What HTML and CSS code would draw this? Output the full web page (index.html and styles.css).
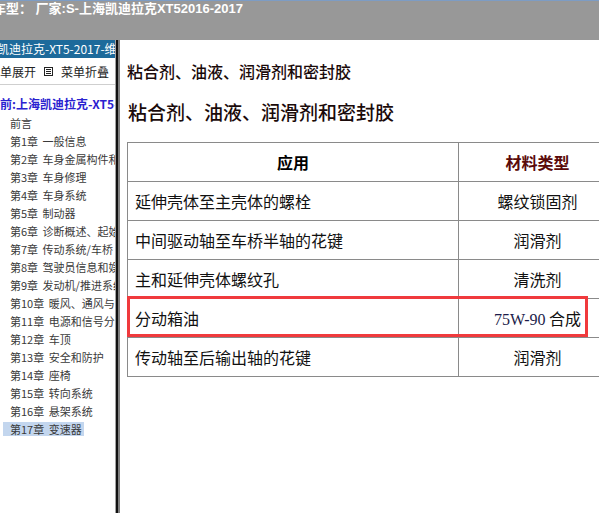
FILE: index.html
```html
<!DOCTYPE html>
<html lang="zh-CN">

<head>
    <meta charset="UTF-8">
    <meta name="viewport" content="width=device-width, initial-scale=1.0">
    <title>维修手册</title>
    <link rel="stylesheet" href="styles.css">
</head>

<body>

    <div class="topbar">
        <span class="car-info">车型： 厂家:S-上海凯迪拉克XT52016-2017</span>
    </div>

    <div class="main">
        <div class="sidebar">
            <div class="side-title">凯迪拉克-XT5-2017-维修手册</div>
            <div class="side-menu">
                <span class="menu-open">菜单展开</span>
                <svg class="menu-icon" width="9" height="9" viewBox="0 0 9 9">
                    <rect x="0.5" y="0.5" width="8" height="8" fill="#fff" stroke="#222" />
                    <line x1="2" y1="2.5" x2="7" y2="2.5" stroke="#222" />
                    <line x1="2" y1="4.5" x2="7" y2="4.5" stroke="#222" />
                    <line x1="2" y1="6.5" x2="7" y2="6.5" stroke="#222" />
                </svg>
                <span>菜单折叠</span>
            </div>
            <div class="current">当前:上海凯迪拉克-XT5-2017</div>
            <ul class="chapters">
                <li>前言</li>
                <li>第1章 一般信息</li>
                <li>第2章 车身金属构件和外饰</li>
                <li>第3章 车身修理</li>
                <li>第4章 车身系统</li>
                <li>第5章 制动器</li>
                <li>第6章 诊断概述、起始</li>
                <li>第7章 传动系统/车桥</li>
                <li>第8章 驾驶员信息和娱乐</li>
                <li>第9章 发动机/推进系统</li>
                <li>第10章 暖风、通风与空调</li>
                <li>第11章 电源和信号分配</li>
                <li>第12章 车顶</li>
                <li>第13章 安全和防护</li>
                <li>第14章 座椅</li>
                <li>第15章 转向系统</li>
                <li>第16章 悬架系统</li>
                <li><span class="active">第17章 变速器</span></li>
            </ul>
        </div>

        <div class="splitter"></div>

        <div class="content">
            <h3 class="sub-title">粘合剂、油液、润滑剂和密封胶</h3>
            <h2 class="page-title">粘合剂、油液、润滑剂和密封胶</h2>

            <div class="table-wrap">
                <table>
                    <tr>
                        <th class="col-app">应用</th>
                        <th class="col-type">材料类型</th>
                    </tr>
                    <tr>
                        <td>延伸壳体至主壳体的螺栓</td>
                        <td class="center">螺纹锁固剂</td>
                    </tr>
                    <tr>
                        <td>中间驱动轴至车桥半轴的花键</td>
                        <td class="center">润滑剂</td>
                    </tr>
                    <tr>
                        <td>主和延伸壳体螺纹孔</td>
                        <td class="center">清洗剂</td>
                    </tr>
                    <tr>
                        <td>分动箱油</td>
                        <td class="center"><span class="oil">75W-90</span> 合成</td>
                    </tr>
                    <tr>
                        <td>传动轴至后输出轴的花键</td>
                        <td class="center">润滑剂</td>
                    </tr>
                </table>
                <div class="mark"></div>
            </div>
        </div>
    </div>

</body>

</html>
```

FILE: styles.css
```css
html,
body {
    margin: 0;
    height: 100%;
    overflow: hidden;
}

body {
    font-family: "Noto Sans CJK SC", sans-serif;
    background-color: #fff;
}

.topbar {
    height: 40px;
    box-sizing: border-box;
    background-color: #989898;
    border-top: 1px solid #7d9cc4;
    overflow: hidden;
    white-space: nowrap;
}

.car-info {
    display: block;
    margin-left: -7px;
    color: #fff;
    font-family: "Liberation Sans", "Noto Sans CJK SC", sans-serif;
    font-size: 13px;
    font-weight: bold;
    line-height: 15px;
}

.main {
    display: flex;
    height: 473px;
}

/* left menu */
.sidebar {
    width: 115px;
    flex: none;
    overflow: hidden;
    white-space: nowrap;
    font-size: 12px;
}

.side-title {
    height: 18px;
    line-height: 18px;
    background-color: #1d6a9b;
    color: #fff;
    text-indent: -3px;
}

.side-menu {
    display: flex;
    align-items: center;
    gap: 8px;
    height: 26px;
    margin-left: -12px;
    color: #222;
    border-bottom: 1px solid #cfcfcf;
}

.menu-icon {
    flex: none;
}

.current {
    margin-top: 12px;
    margin-left: -12px;
    line-height: 14px;
    color: #2a22d0;
    font-weight: bold;
}

.chapters {
    list-style: none;
    margin: 3px 0 0;
    padding: 0 0 0 10px;
    color: #3a3a3a;
    font-size: 11px;
    word-spacing: 2px;
}

.chapters li {
    line-height: 18px;
}

.chapters .active {
    display: inline-block;
    line-height: 14px;
    margin-left: -7px;
    padding: 0 2px 0 7px;
    background-color: #c3d6ee;
}

/* bar between menu and page */
.splitter {
    width: 2px;
    flex: none;
    background-color: #111;
    border-left: 1px solid #a2a2a2;
    border-right: 2px solid #7e7e7e;
}

/* page */
.content {
    flex: 1;
    overflow: hidden;
    padding-left: 7px;
}

.sub-title {
    margin: 21px 0 0;
    font-size: 16px;
    font-weight: 500;
    line-height: 20px;
    color: #1a0a0a;
}

.page-title {
    margin: 19px 0 0 1px;
    font-size: 19px;
    font-weight: 500;
    line-height: 24px;
    color: #1a0a0a;
    white-space: nowrap;
}

.table-wrap {
    position: relative;
    margin-top: 18px;
    width: 490px;
}

table {
    width: 490px;
    border-collapse: collapse;
    font-size: 16px;
    color: #111;
}

th,
td {
    height: 38px;
    border: 1px solid #8a8a8a;
    padding: 0 7px;
    white-space: nowrap;
}

.col-app {
    width: 316px;
    color: #000;
}

.col-type {
    color: #5a0a0a;
}

.center {
    text-align: center;
}

.oil {
    font-family: "Liberation Serif", serif;
    color: #1c1c4a;
}

/* highlight frame over the oil row */
.mark {
    position: absolute;
    left: 0;
    top: 154px;
    width: 461px;
    height: 41px;
    box-sizing: border-box;
    border: 3px solid #f03a3d;
}
```
